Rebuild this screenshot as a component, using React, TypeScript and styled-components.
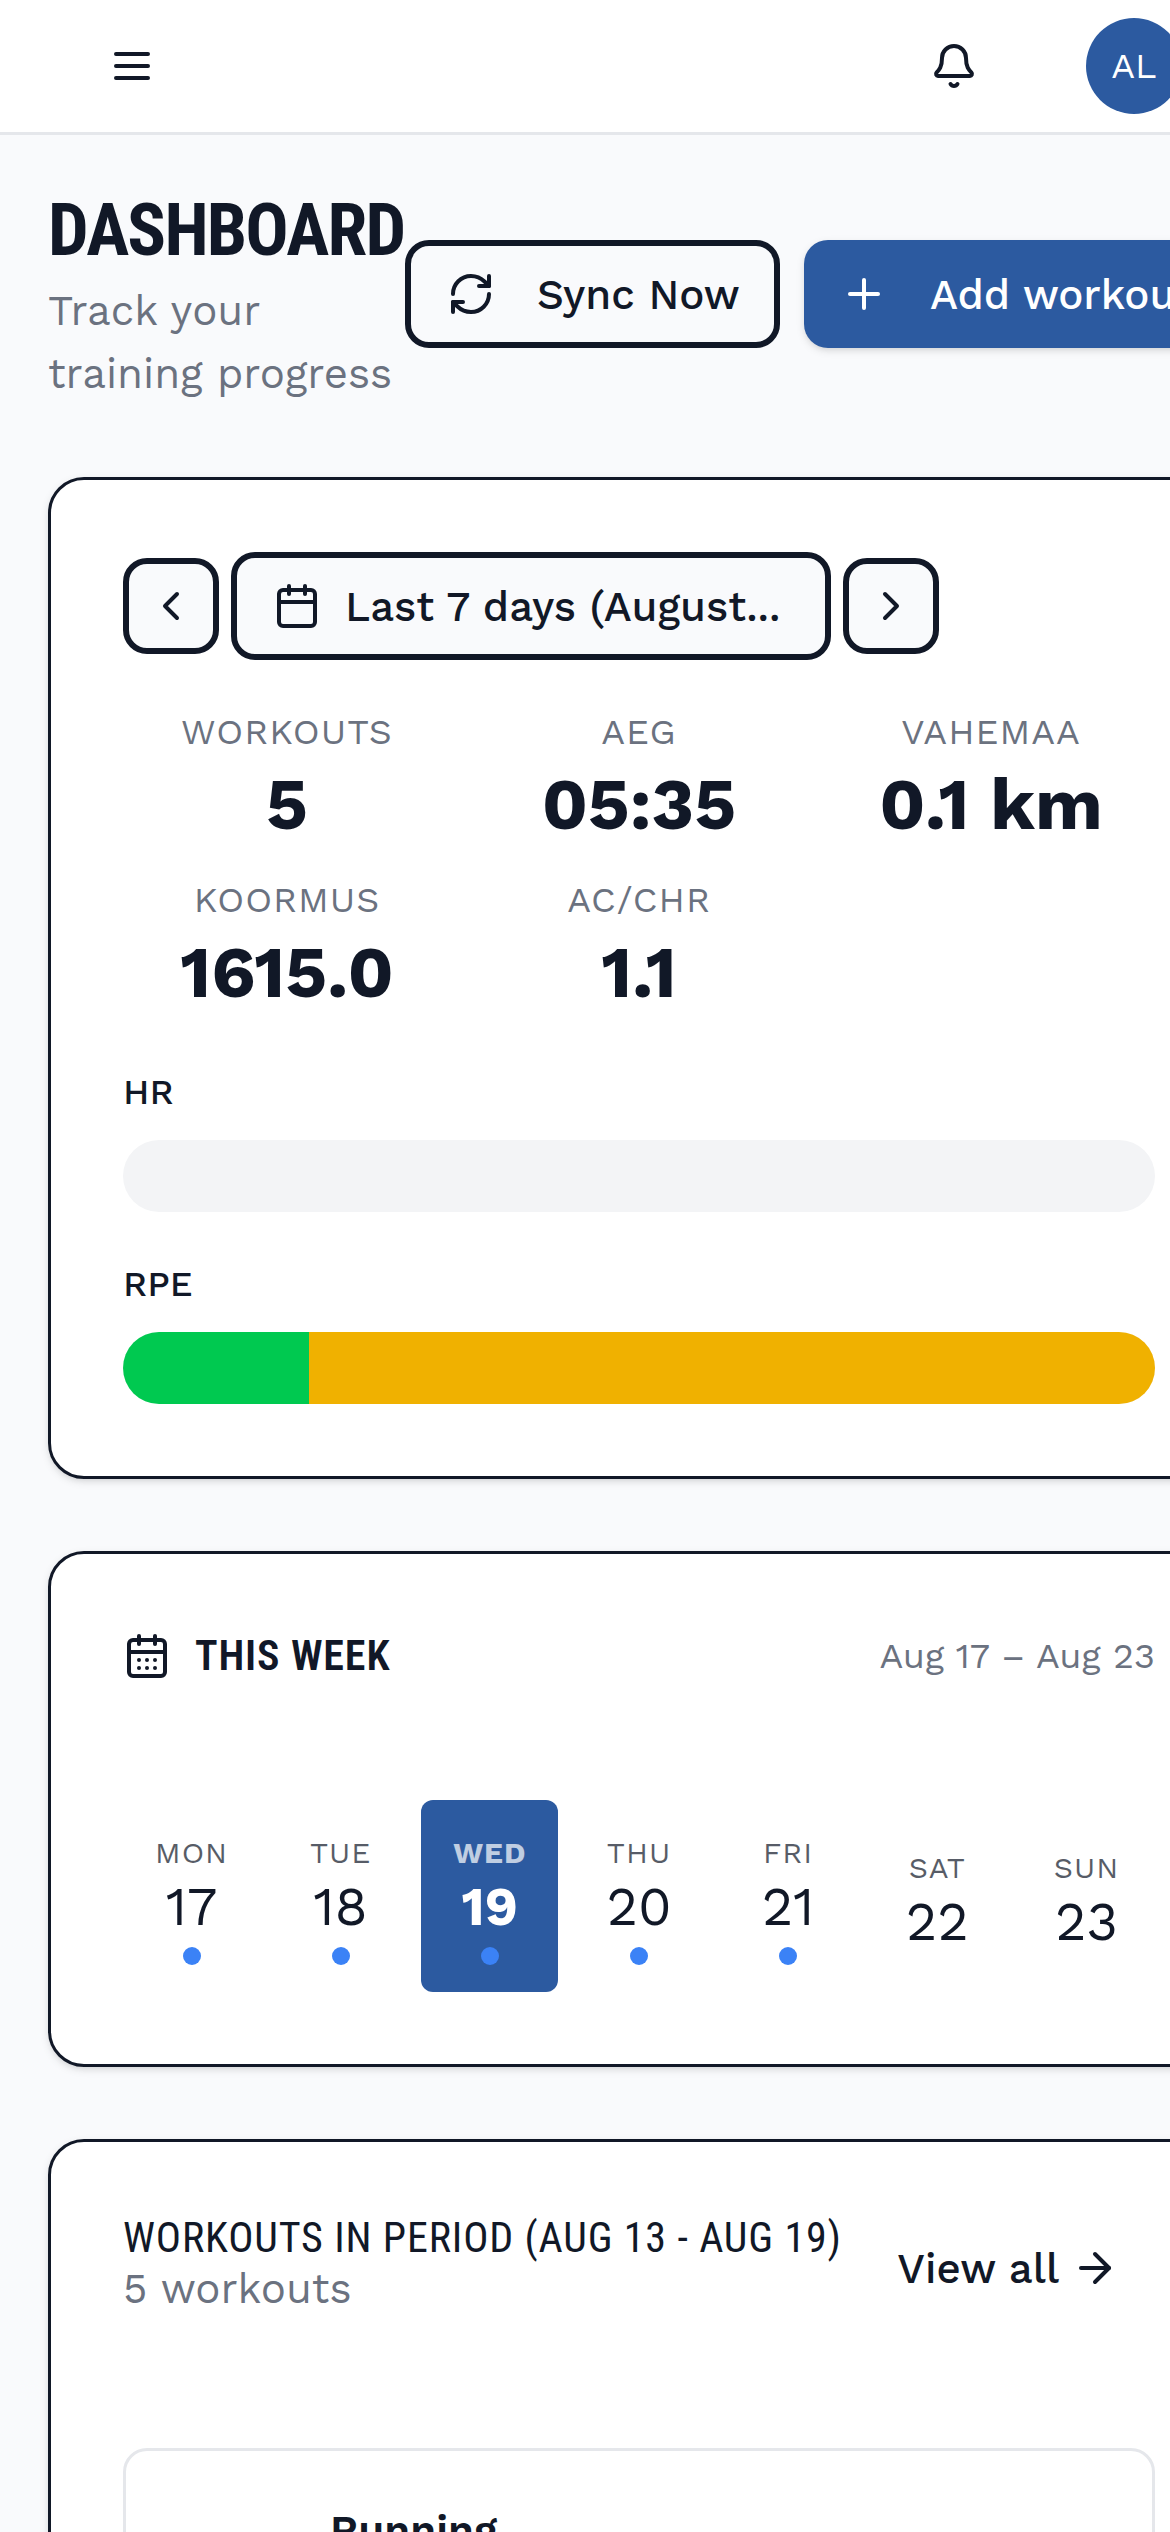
import React from "react";
import styled, { createGlobalStyle } from "styled-components";
import {
  ArrowRight,
  Bell,
  Calendar,
  CalendarDays,
  ChevronLeft,
  ChevronRight,
  Plus,
  RefreshCw,
} from "lucide-react";

const ink = "#111827";
const muted = "#6b7280";
const line = "#e5e7eb";
const surface = "#f9fafc";
const brand = "#2c5aa0";
const bodyFont = `"Work Sans", Inter, "Noto Sans", sans-serif`;
const headingFont = `"Roboto Condensed", "Liberation Sans Narrow", Roboto, sans-serif`;

const GlobalStyle = createGlobalStyle`
  *, *::before, *::after { box-sizing: border-box; }
  body {
    margin: 0;
    background: ${surface};
    color: ${ink};
    font-family: ${bodyFont};
    font-size: 42px;
    line-height: 63px;
  }
  h1, h2, h3, p, dl, dt, dd, ol, ul { margin: 0; padding: 0; }
  ol, ul { list-style: none; }
  button { font: inherit; color: inherit; cursor: pointer; }
  svg { flex: none; display: block; }
`;

const Viewport = styled.div`
  height: 100vh;
  overflow: hidden;
`;

const Shell = styled.div`
  min-width: 1278px;
`;

const TopBar = styled.header`
  display: flex;
  align-items: center;
  justify-content: space-between;
  height: 135px;
  padding: 0 72px;
  background: #fff;
  border-bottom: 3px solid ${line};
`;

const TopActions = styled.div`
  display: flex;
  align-items: center;
  gap: 48px;
`;

const GhostIconButton = styled.button`
  display: grid;
  place-items: center;
  width: 120px;
  height: 120px;
  padding: 0;
  border: 0;
  background: transparent;
`;

const AvatarButton = styled.button`
  display: flex;
  padding: 0 24px;
  border: 0;
  background: transparent;
`;

const Avatar = styled.span`
  display: grid;
  place-items: center;
  width: 96px;
  height: 96px;
  border-radius: 50%;
  background: ${brand};
  color: #fff;
  font-size: 36px;
  line-height: 48px;
`;

const Main = styled.main`
  display: flex;
  flex-direction: column;
  gap: 72px;
  padding: 48px;
`;

const PageHead = styled.div`
  display: flex;
  align-items: center;
  justify-content: space-between;
`;

const PageTitle = styled.h1`
  font-family: ${headingFont};
  font-size: 72px;
  line-height: 96px;
  font-weight: 700;
  letter-spacing: -0.025em;
`;

const TitleBlock = styled.div`
  width: 357px;
`;

const Muted = styled.p<{ $line?: number }>`
  color: ${muted};
  line-height: ${(p) => p.$line ?? 63}px;
`;

const Buttons = styled.div`
  display: flex;
  gap: 24px;
`;

const Button = styled.button<{ $solid?: boolean; $gap?: number; $width: number }>`
  display: flex;
  align-items: center;
  gap: ${(p) => p.$gap ?? 42}px;
  width: ${(p) => p.$width}px;
  height: 108px;
  padding: 0 36px;
  border: ${(p) => (p.$solid ? "0" : `6px solid ${ink}`)};
  border-radius: 24px;
  background: ${(p) => (p.$solid ? brand : surface)};
  color: ${(p) => (p.$solid ? "#fff" : ink)};
  font-weight: 500;
  white-space: nowrap;
  box-shadow: ${(p) =>
    p.$solid ? "0 3px 9px rgba(0,0,0,.1), 0 3px 6px -3px rgba(0,0,0,.1)" : "none"};
`;

const StepButton = styled.button`
  display: grid;
  place-items: center;
  width: 96px;
  height: 96px;
  padding: 0;
  border: 6px solid ${ink};
  border-radius: 24px;
  background: ${surface};
`;

const Card = styled.section`
  padding: 72px;
  border: 3px solid ${ink};
  border-radius: 36px;
  background: #fff;
  box-shadow: 0 3px 9px rgba(0, 0, 0, 0.1), 0 3px 6px -3px rgba(0, 0, 0, 0.1);
`;

const PeriodRow = styled.div`
  display: flex;
  align-items: center;
  gap: 12px;
`;

const Stats = styled.dl`
  display: grid;
  grid-template-columns: repeat(3, 1fr);
  gap: 24px;
  margin-top: 48px;
  text-align: center;
`;

const StatLabel = styled.dt`
  color: ${muted};
  font-size: 36px;
  line-height: 48px;
  letter-spacing: 1px;
`;

const StatValue = styled.dd`
  font-size: 72px;
  line-height: 96px;
  font-weight: 700;
`;

const Zone = styled.div`
  margin-top: 48px;
`;

const ZoneLabel = styled.h3`
  margin-bottom: 24px;
  font-size: 36px;
  line-height: 48px;
  font-weight: 500;
`;

const Track = styled.div`
  display: flex;
  height: 72px;
  overflow: hidden;
  border-radius: 36px;
  background: #f3f4f6;
`;

const Segment = styled.div<{ $color: string }>`
  background: ${(p) => p.$color};
`;

const CardHead = styled.div<{ $bottom: number }>`
  display: flex;
  align-items: center;
  justify-content: space-between;
  margin-bottom: ${(p) => p.$bottom}px;
`;

const WeekTitle = styled.h2`
  display: flex;
  align-items: center;
  gap: 24px;
  font-family: ${headingFont};
  font-size: 42px;
  line-height: 60px;
  font-weight: 600;
  letter-spacing: 0.02em;
`;

const WeekRange = styled.span`
  color: ${muted};
  font-size: 36px;
  line-height: 48px;
`;

const Days = styled.ol`
  display: grid;
  grid-template-columns: repeat(7, 1fr);
  gap: 12px;
`;

const Day = styled.button<{ $today?: boolean }>`
  display: flex;
  flex-direction: column;
  align-items: center;
  justify-content: center;
  width: 100%;
  height: 192px;
  padding: 6px 0 0;
  border: 0;
  border-radius: 12px;
  background: ${(p) => (p.$today ? brand : "transparent")};
  color: ${(p) => (p.$today ? "#fff" : ink)};
  font-weight: ${(p) => (p.$today ? 700 : 400)};
`;

const DayName = styled.span`
  font-size: 30px;
  line-height: 45px;
  letter-spacing: 1px;
  opacity: 0.7;
`;

const DayNumber = styled.span`
  font-size: 54px;
  line-height: 63px;
`;

const Dot = styled.span`
  width: 18px;
  height: 18px;
  margin: 9px 0 3px;
  border-radius: 50%;
  background: #3b82f6;
`;

const ListTitle = styled.h2`
  font-family: ${headingFont};
  font-size: 42px;
  line-height: 42px;
  font-weight: 400;
  letter-spacing: 0.02em;
`;

const ViewAll = styled.a`
  display: flex;
  align-items: center;
  gap: 12px;
  height: 108px;
  padding: 0 36px;
  color: ${ink};
  font-weight: 500;
  text-decoration: none;
  white-space: nowrap;
`;

const Workout = styled.article`
  padding: 48px 48px 48px 204px;
  border: 3px solid ${line};
  border-radius: 24px;
`;

const WorkoutName = styled.h3`
  font-size: 42px;
  line-height: 63px;
  font-weight: 600;
`;

const stats = [
  ["WORKOUTS", "5"],
  ["AEG", "05:35"],
  ["VAHEMAA", "0.1 km"],
  ["KOORMUS", "1615.0"],
  ["AC/CHR", "1.1"],
];

const zones = [
  { name: "HR", parts: [] },
  {
    name: "RPE",
    parts: [
      { color: "#00c950", share: 18 },
      { color: "#f0b100", share: 82 },
    ],
  },
];

const days = [
  { name: "MON", date: 17, active: true },
  { name: "TUE", date: 18, active: true },
  { name: "WED", date: 19, active: true, today: true },
  { name: "THU", date: 20, active: true },
  { name: "FRI", date: 21, active: true },
  { name: "SAT", date: 22 },
  { name: "SUN", date: 23 },
];

const MenuIcon = () => (
  <svg
    width="48"
    height="48"
    viewBox="0 0 24 24"
    fill="none"
    stroke="currentColor"
    strokeWidth="2"
    strokeLinecap="round"
  >
    <path d="M4 6h16M4 12h16M4 18h16" />
  </svg>
);

export default function App() {
  return (
    <Viewport>
      <GlobalStyle />
      <Shell>
        <TopBar>
          <GhostIconButton aria-label="Menu">
            <MenuIcon />
          </GhostIconButton>
          <TopActions>
            <GhostIconButton aria-label="Notifications">
              <Bell size={48} />
            </GhostIconButton>
            <AvatarButton>
              <Avatar>AL</Avatar>
            </AvatarButton>
          </TopActions>
        </TopBar>

        <Main>
          <PageHead>
            <TitleBlock>
              <PageTitle>DASHBOARD</PageTitle>
              <Muted>Track your training progress</Muted>
            </TitleBlock>
            <Buttons>
              <Button $width={375}>
                <RefreshCw size={48} />
                Sync Now
              </Button>
              <Button $solid $width={426}>
                <Plus size={48} />
                Add workout
              </Button>
            </Buttons>
          </PageHead>

          <Card>
            <PeriodRow>
              <StepButton aria-label="Previous period">
                <ChevronLeft size={48} />
              </StepButton>
              <Button $width={600} $gap={24}>
                <Calendar size={48} />
                Last 7 days (August...
              </Button>
              <StepButton aria-label="Next period">
                <ChevronRight size={48} />
              </StepButton>
            </PeriodRow>
            <Stats>
              {stats.map(([label, value]) => (
                <div key={label}>
                  <StatLabel>{label}</StatLabel>
                  <StatValue>{value}</StatValue>
                </div>
              ))}
            </Stats>
            {zones.map((zone) => (
              <Zone key={zone.name}>
                <ZoneLabel>{zone.name}</ZoneLabel>
                <Track>
                  {zone.parts.map((part) => (
                    <Segment
                      key={part.color}
                      $color={part.color}
                      style={{ width: `${part.share}%` }}
                    />
                  ))}
                </Track>
              </Zone>
            ))}
          </Card>

          <Card>
            <CardHead $bottom={114}>
              <WeekTitle>
                <CalendarDays size={48} />
                THIS WEEK
              </WeekTitle>
              <WeekRange>Aug 17 – Aug 23</WeekRange>
            </CardHead>
            <Days>
              {days.map((day) => (
                <li key={day.name}>
                  <Day $today={day.today}>
                    <DayName>{day.name}</DayName>
                    <DayNumber>{day.date}</DayNumber>
                    {day.active && <Dot />}
                  </Day>
                </li>
              ))}
            </Days>
          </Card>

          <Card>
            <CardHead $bottom={126}>
              <div>
                <ListTitle>WORKOUTS IN PERIOD (AUG 13 - AUG 19)</ListTitle>
                <Muted $line={60}>5 workouts</Muted>
              </div>
              <ViewAll href="#workouts">
                View all
                <ArrowRight size={48} />
              </ViewAll>
            </CardHead>
            <Workout>
              <WorkoutName>Running</WorkoutName>
            </Workout>
          </Card>
        </Main>
      </Shell>
    </Viewport>
  );
}
